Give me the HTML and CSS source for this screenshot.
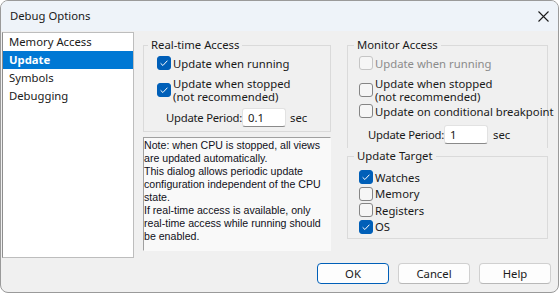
FILE: index.html
```html
<!DOCTYPE html>
<html lang="en">
<head>
  <meta charset="UTF-8">
  <title>Debug Options</title>
  <link rel="stylesheet" href="styles.css">
</head>
<body>
  <div class="window">
    <div class="titlebar">
      <span class="title">Debug Options</span>
      <span class="close">
        <svg width="11" height="11" viewBox="0 0 11 11"><path d="M0.5 0.5 L10.5 10.5 M10.5 0.5 L0.5 10.5" stroke="#1b1b1b" stroke-width="1.1" fill="none"/></svg>
      </span>
    </div>

    <div class="content">
      <ul class="nav">
        <li>Memory Access</li>
        <li class="selected">Update</li>
        <li>Symbols</li>
        <li>Debugging</li>
      </ul>

      <div class="col col-left">
        <fieldset class="group realtime">
          <legend>Real-time Access</legend>
          <div class="group-body">
            <label class="check row-single">
              <span class="box checked"><svg width="14" height="14" viewBox="0 0 14 14"><path d="M3.6 7.3 L5.9 9.5 L10.4 4.7" stroke="#fff" stroke-width="1" fill="none"/></svg></span>
              <span>Update when running</span>
            </label>
            <label class="check row-double">
              <span class="box checked"><svg width="14" height="14" viewBox="0 0 14 14"><path d="M3.6 7.3 L5.9 9.5 L10.4 4.7" stroke="#fff" stroke-width="1" fill="none"/></svg></span>
              <span>Update when stopped<br>(not recommended)</span>
            </label>
            <div class="period">
              <span class="period-label">Update Period:</span>
              <input class="edit" type="text" value="0.1">
              <span>sec</span>
            </div>
          </div>
        </fieldset>

        <div class="note">Note: when CPU is stopped, all views<br>are updated automatically.<br>This dialog allows periodic update<br>configuration independent of the CPU<br>state.<br>If real-time access is available, only<br>real-time access while running should<br>be enabled.</div>
      </div>

      <div class="col col-right">
        <fieldset class="group monitor">
          <legend>Monitor Access</legend>
          <div class="group-body">
            <label class="check row-single disabled">
              <span class="box"></span>
              <span>Update when running</span>
            </label>
            <label class="check row-double">
              <span class="box"></span>
              <span>Update when stopped<br>(not recommended)</span>
            </label>
            <label class="check row-tight">
              <span class="box"></span>
              <span>Update on conditional breakpoint</span>
            </label>
            <div class="period">
              <span class="period-label">Update Period:</span>
              <input class="edit" type="text" value="1">
              <span>sec</span>
            </div>
          </div>
        </fieldset>

        <fieldset class="group target">
          <legend>Update Target</legend>
          <div class="group-body">
            <label class="check row-list">
              <span class="box checked"><svg width="14" height="14" viewBox="0 0 14 14"><path d="M3.6 7.3 L5.9 9.5 L10.4 4.7" stroke="#fff" stroke-width="1" fill="none"/></svg></span>
              <span>Watches</span>
            </label>
            <label class="check row-list">
              <span class="box"></span>
              <span>Memory</span>
            </label>
            <label class="check row-list">
              <span class="box"></span>
              <span>Registers</span>
            </label>
            <label class="check row-list">
              <span class="box checked"><svg width="14" height="14" viewBox="0 0 14 14"><path d="M3.6 7.3 L5.9 9.5 L10.4 4.7" stroke="#fff" stroke-width="1" fill="none"/></svg></span>
              <span>OS</span>
            </label>
          </div>
        </fieldset>
      </div>
    </div>

    <div class="footer">
      <button class="btn default">OK</button>
      <button class="btn">Cancel</button>
      <button class="btn">Help</button>
    </div>
  </div>
</body>
</html>
```

FILE: styles.css
```css
html, body {
  margin: 0;
  padding: 0;
  background-color: #fff;
}

body {
  font-family: "Noto Sans", "Liberation Sans", sans-serif;
  font-size: 11.3px;
  color: #1a1a1a;
}

.window {
  width: 559px;
  height: 293px;
  box-sizing: border-box;
  border: 1px solid #9a9a9a;
  border-radius: 8px;
  overflow: hidden;
  background-color: #f0f0f0;
  display: flex;
  flex-direction: column;
}

.titlebar {
  height: 30px;
  background-color: #eef3f9;
  display: flex;
  align-items: center;
  justify-content: space-between;
  padding: 0 9px 0 9px;
}

.title {
  line-height: 16px;
}

.close {
  display: flex;
}

.content {
  display: flex;
  height: 227px;
}

.nav {
  list-style: none;
  margin: 1px 0 0 1px;
  padding: 0;
  width: 132px;
  height: 226px;
  box-sizing: border-box;
  background-color: #fff;
  border: 1px solid #bdbdbd;
  border-left-color: #8e8e8e;
}

.nav li {
  height: 18px;
  line-height: 18px;
  padding-left: 6px;
}

.nav li.selected {
  background-color: #0078d4;
  color: #fff;
  font-weight: bold;
}

.col {
  margin-top: 6px;
  display: flex;
  flex-direction: column;
}

.col-left {
  width: 188px;
  margin-left: 9px;
}

.col-right {
  width: 201px;
  margin-left: 16px;
}

.group {
  margin: 0;
  padding: 0;
  min-width: 0;
  border: 1px solid #dadada;
}

.group legend {
  line-height: 16px;
  padding: 0 3px;
  margin-left: 6px;
}

.realtime legend {
  margin-left: 4px;
}

.realtime .group-body {
  padding: 0 0 2px 13px;
}

.monitor {
  border-bottom: none;
}

.monitor .group-body {
  padding: 0 0 2px 11px;
}

.target .group-body {
  padding: 5px 0 3px 11px;
}

.check {
  display: flex;
  align-items: center;
  gap: 2px;
  line-height: 13px;
  white-space: nowrap;
}

.row-single {
  height: 20px;
}

.row-double {
  height: 28px;
  margin-top: 3px;
}

.row-tight {
  height: 14px;
}

.row-list {
  height: 16.5px;
}

.box {
  width: 12px;
  height: 12px;
  flex: none;
  position: relative;
  border: 1px solid #858585;
  border-radius: 3px;
  background-color: #f6f6f6;
}

.box svg {
  position: absolute;
  left: -1px;
  top: -1px;
}

.box.checked {
  border-color: #005fb8;
  background-color: #005fb8;
}

.disabled {
  color: #8c8c8c;
}

.disabled .box {
  border-color: #c5c5c5;
  background-color: #f6f6f6;
}

.period {
  display: flex;
  align-items: center;
  height: 24px;
  margin-top: 1px;
  padding-left: 9px;
  white-space: nowrap;
}

.monitor .period {
  margin-top: 4px;
}

.period-label {
  width: 76px;
  letter-spacing: -0.25px;
}

.edit {
  width: 44px;
  height: 19px;
  box-sizing: border-box;
  margin: 0 4px 0 0;
  padding: 0 5px;
  font-family: inherit;
  font-size: 11.3px;
  color: #1a1a1a;
  background-color: #fff;
  border: 1px solid #e2e2e2;
  border-bottom-color: #8a8a8a;
  border-radius: 3px;
  outline: none;
}

.monitor .edit {
  margin-right: 5px;
}

.note {
  margin-top: 5px;
  height: 114px;
  box-sizing: border-box;
  padding: 1px 0 0 0;
  background-color: #f9f9f9;
  border: 1px solid #f9f9f9;
  border-top-color: #a0a0a0;
  border-left-color: #a0a0a0;
  font-family: "Liberation Sans", sans-serif;
  font-size: 10.6px;
  line-height: 13px;
  white-space: nowrap;
  color: #101020;
}

.footer {
  flex: 1;
  display: flex;
  justify-content: flex-end;
  align-items: flex-start;
  gap: 9px;
  padding: 5px 7px 0 0;
}

.btn {
  width: 72px;
  height: 21px;
  box-sizing: border-box;
  font-family: inherit;
  font-size: 11.3px;
  color: #1a1a1a;
  background-color: #fdfdfd;
  border: 1px solid #d0d0d0;
  border-bottom-color: #b8b8b8;
  border-radius: 4px;
  padding: 0;
}

.btn.default {
  border: 1px solid #005fb8;
}
```
